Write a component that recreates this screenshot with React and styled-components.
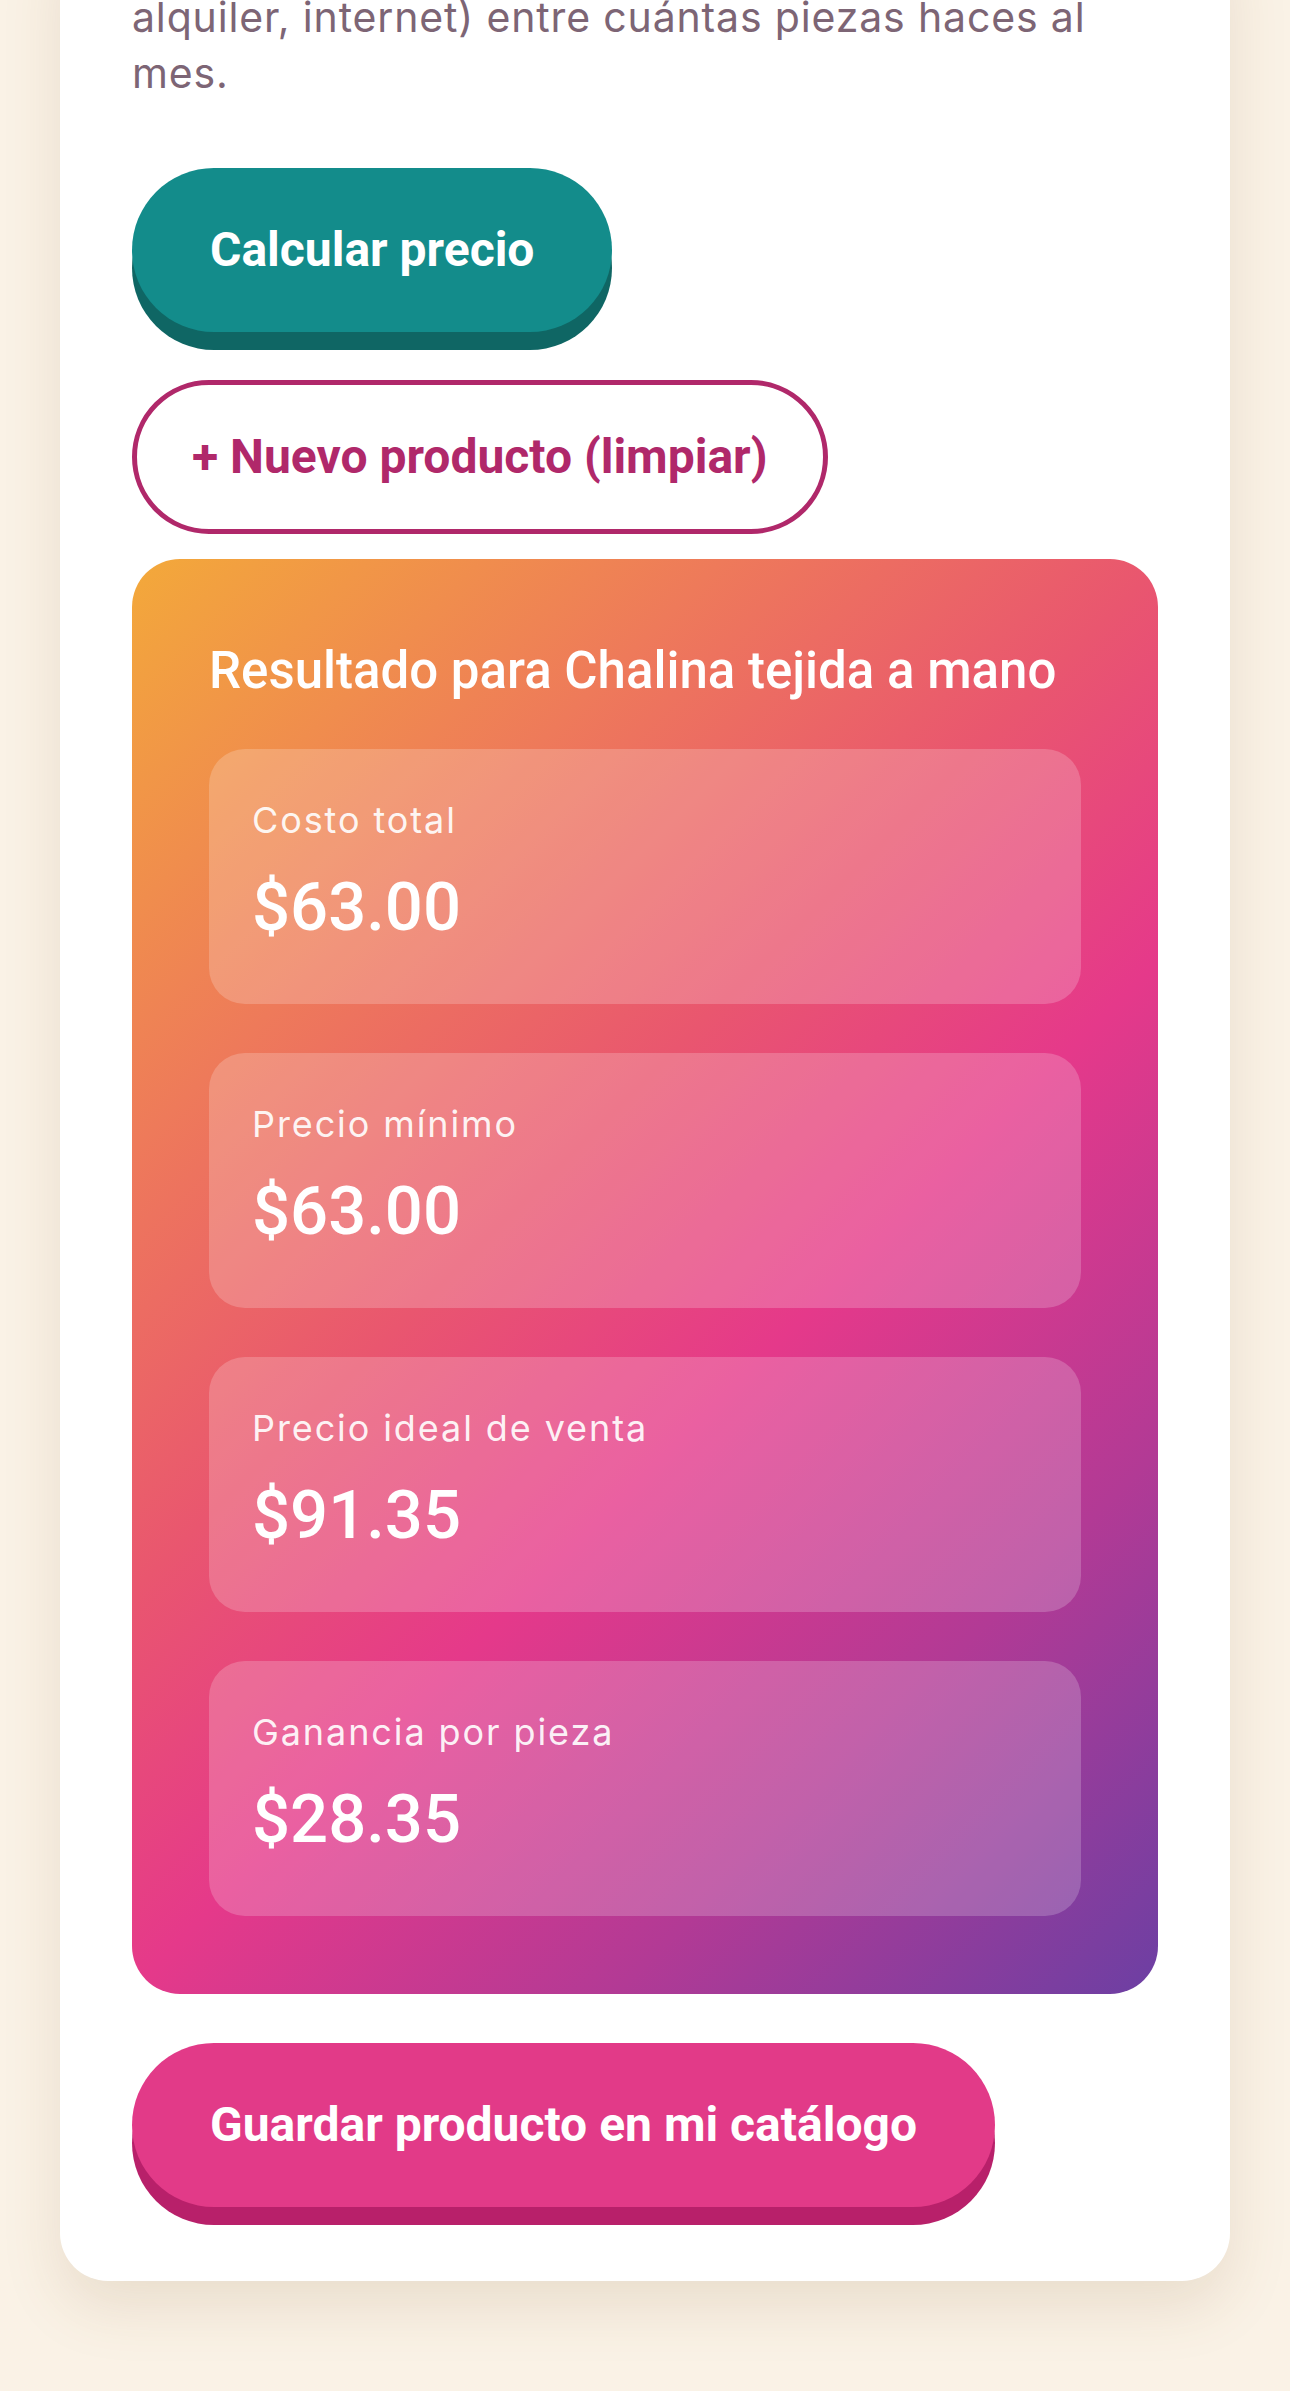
import React from "react";
import styled, { createGlobalStyle } from "styled-components";

const results = [
  { label: "Costo total", value: "$63.00" },
  { label: "Precio mínimo", value: "$63.00" },
  { label: "Precio ideal de venta", value: "$91.35" },
  { label: "Ganancia por pieza", value: "$28.35" },
];

const GlobalStyle = createGlobalStyle`
  body {
    margin: 0;
    background: #faf2e6;
    font-family: "Inter", "Noto Sans", sans-serif;
  }
`;

const Page = styled.div`
  padding: 0 60px 112px;
`;

const Card = styled.section`
  margin-top: -83px;
  padding: 72px 72px 74px;
  background: #ffffff;
  border-radius: 48px;
  box-shadow: 0 26px 60px rgba(120, 84, 40, 0.13);
  display: flex;
  flex-direction: column;
  align-items: flex-start;
`;

const Hint = styled.p`
  margin: 0 0 67px;
  font-family: "Inter", "Noto Sans", sans-serif;
  font-size: 41px;
  line-height: 56px;
  letter-spacing: 0.85px;
  color: #7d6575;
`;

const PushButton = styled.button`
  border: none;
  border-radius: 999px;
  padding: 54px 78px;
  font-family: "Roboto", "Noto Sans", sans-serif;
  font-weight: 700;
  font-size: 48px;
  line-height: 56px;
  color: #ffffff;
  background: ${(p) => p.$bg};
  box-shadow: 0 18px 0 ${(p) => p.$edge};
  margin-top: ${(p) => p.$top || 0}px;
  cursor: pointer;
`;

const GhostButton = styled.button`
  margin-top: 48px;
  border: 5px solid #b0286a;
  border-radius: 999px;
  padding: 44px 55px;
  background: #ffffff;
  font-family: "Roboto", "Noto Sans", sans-serif;
  font-weight: 700;
  font-size: 48px;
  line-height: 56px;
  color: #b0286a;
  cursor: pointer;
`;

const ResultBox = styled.div`
  align-self: stretch;
  margin-top: 25px;
  padding: 82px 77px 78px;
  border-radius: 48px;
  background: linear-gradient(
    135deg,
    #f3a93a 0%,
    #ee7a5a 24%,
    #e9566f 42%,
    #e5398a 58%,
    #b23a95 78%,
    #6c3fa3 100%
  );
  color: #ffffff;
`;

const ResultTitle = styled.h2`
  margin: 0 0 48px;
  font-family: "Roboto", "Noto Sans", sans-serif;
  font-weight: 500;
  font-size: 51px;
  line-height: 60px;
`;

const Tiles = styled.div`
  display: flex;
  flex-direction: column;
  gap: 49px;
`;

const Tile = styled.div`
  padding: 48px 43px 57px;
  border-radius: 36px;
  background: rgba(255, 255, 255, 0.2);
`;

const TileLabel = styled.div`
  font-family: "Inter", "Noto Sans", sans-serif;
  font-size: 36px;
  line-height: 47px;
  letter-spacing: 1.9px;
  color: rgba(255, 255, 255, 0.92);
`;

const TileValue = styled.div`
  margin-top: 24px;
  font-family: "Roboto", "Noto Sans", sans-serif;
  font-weight: 500;
  font-size: 67px;
  line-height: 79px;
`;

const App = () => {
  return (
    <>
      <GlobalStyle />
      <Page>
        <Card>
          <Hint>
            alquiler, internet) entre cuántas piezas haces al
            <br />
            mes.
          </Hint>
          <PushButton $bg="#138c8b" $edge="#0f6664">
            Calcular precio
          </PushButton>
          <GhostButton>+ Nuevo producto (limpiar)</GhostButton>
          <ResultBox>
            <ResultTitle>Resultado para Chalina tejida a mano</ResultTitle>
            <Tiles>
              {results.map((r) => (
                <Tile key={r.label}>
                  <TileLabel>{r.label}</TileLabel>
                  <TileValue>{r.value}</TileValue>
                </Tile>
              ))}
            </Tiles>
          </ResultBox>
          <PushButton $bg="#e23a88" $edge="#b8206a" $top={49}>
            Guardar producto en mi catálogo
          </PushButton>
        </Card>
      </Page>
    </>
  );
};

export default App;
